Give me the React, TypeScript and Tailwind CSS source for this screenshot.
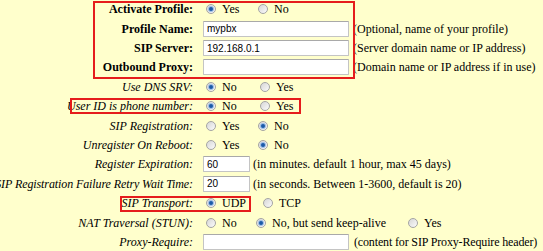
type Opt = { label: string; checked?: boolean; w?: string };

type Row = {
  label: string;
  bold?: boolean;
  tight?: boolean;
  options?: Opt[];
  input?: { value: string; wide?: boolean };
  desc?: string;
  descCls?: string;
};

const rows: Row[] = [
  { label: "Activate Profile:", bold: true, options: [{ label: "Yes", checked: true, w: "w-[52px]" }, { label: "No" }] },
  { label: "Profile Name:", bold: true, input: { value: "mypbx", wide: true }, desc: "(Optional, name of your profile)" },
  { label: "SIP Server:", bold: true, input: { value: "192.168.0.1", wide: true }, desc: "(Server domain name or IP address)" },
  { label: "Outbound Proxy:", bold: true, input: { value: "", wide: true }, desc: "(Domain name or IP address if in use)" },
  { label: "Use DNS SRV:", options: [{ label: "No", checked: true, w: "w-[54px]" }, { label: "Yes" }] },
  { label: "User ID is phone number:", options: [{ label: "No", checked: true, w: "w-[54px]" }, { label: "Yes" }] },
  { label: "SIP Registration:", options: [{ label: "Yes", w: "w-[52px]" }, { label: "No", checked: true }] },
  { label: "Unregister On Reboot:", options: [{ label: "Yes", w: "w-[52px]" }, { label: "No", checked: true }] },
  { label: "Register Expiration:", input: { value: "60" }, desc: "(in minutes. default 1 hour, max 45 days)" },
  { label: "SIP Registration Failure Retry Wait Time:", tight: true, input: { value: "20" }, desc: "(in seconds. Between 1-3600, default is 20)" },
  { label: "SIP Transport:", options: [{ label: "UDP", checked: true, w: "w-[57px]" }, { label: "TCP" }] },
  {
    label: "NAT Traversal (STUN):",
    options: [
      { label: "No", w: "w-[50px]" },
      { label: "No, but send keep-alive", checked: true, w: "w-[152px]" },
      { label: "Yes" },
    ],
  },
  {
    label: "Proxy-Require:",
    input: { value: "", wide: true },
    desc: "(content for SIP Proxy-Require header)",
    descCls: "ml-[5px] tracking-[-0.15px]",
  },
];

function Radio({ checked }: { checked?: boolean }) {
  return (
    <span className="ml-[3px] inline-flex h-[10px] w-[10px] shrink-0 items-center justify-center rounded-full border border-[#a4a4a4] bg-gradient-to-br from-[#d6d6d6] to-[#fbfbfb]">
      {checked && <span className="h-[4px] w-[4px] rounded-full bg-[#1d5aa8] shadow-[0_0_0_1px_#9cbde6]" />}
    </span>
  );
}

export default function App() {
  return (
    <div className="relative h-[251px] w-[543px] overflow-hidden bg-[#ffffcc] text-[12px] text-black" style={{ fontFamily: "'Liberation Serif', 'Times New Roman', serif" }}>
      <div className="-mt-[0.5px] grid auto-rows-[19.42px] grid-cols-[193px_1fr] gap-x-[10px]">
        {rows.map((r) => (
          <div key={r.label} className="contents">
            {/* label cell, overflows to the left when too long */}
            <div className="flex items-center justify-end whitespace-nowrap">
              <span className={`${r.bold ? "font-bold" : "italic"} ${r.tight ? "tracking-[-0.1px]" : ""}`}>{r.label}</span>
            </div>
            <div className="flex items-center whitespace-nowrap">
              {r.options &&
                r.options.map((o) => (
                  <span key={o.label} className={`flex items-center ${o.w ?? ""}`}>
                    <Radio checked={o.checked} />
                    <span className="ml-[6px]">{o.label}</span>
                  </span>
                ))}
              {r.input && (
                <>
                  <span
                    className={`flex h-[16px] items-center rounded-[1px] border border-[#c4c4c4] border-t-[#a9a9a9] bg-white pl-[3px] text-[10px] ${r.input.wide ? "w-[146px]" : "w-[47px]"}`}
                    style={{ fontFamily: "'Liberation Sans', Arial, sans-serif" }}
                  >
                    {r.input.value}
                  </span>
                  <span className={r.descCls ?? (r.input.wide ? "ml-[4px]" : "ml-[3px]")}>{r.desc}</span>
                </>
              )}
            </div>
          </div>
        ))}
      </div>

      {/* red highlight annotations */}
      <div className="absolute left-[93px] top-[1px] h-[78px] w-[262px] border-2 border-[#e51c1c]" />
      <div className="absolute left-[70px] top-[98px] h-[16px] w-[231px] border-2 border-[#e51c1c]" />
      <div className="absolute left-[120px] top-[196px] h-[16px] w-[131px] border-2 border-[#e51c1c]" />
    </div>
  );
}
